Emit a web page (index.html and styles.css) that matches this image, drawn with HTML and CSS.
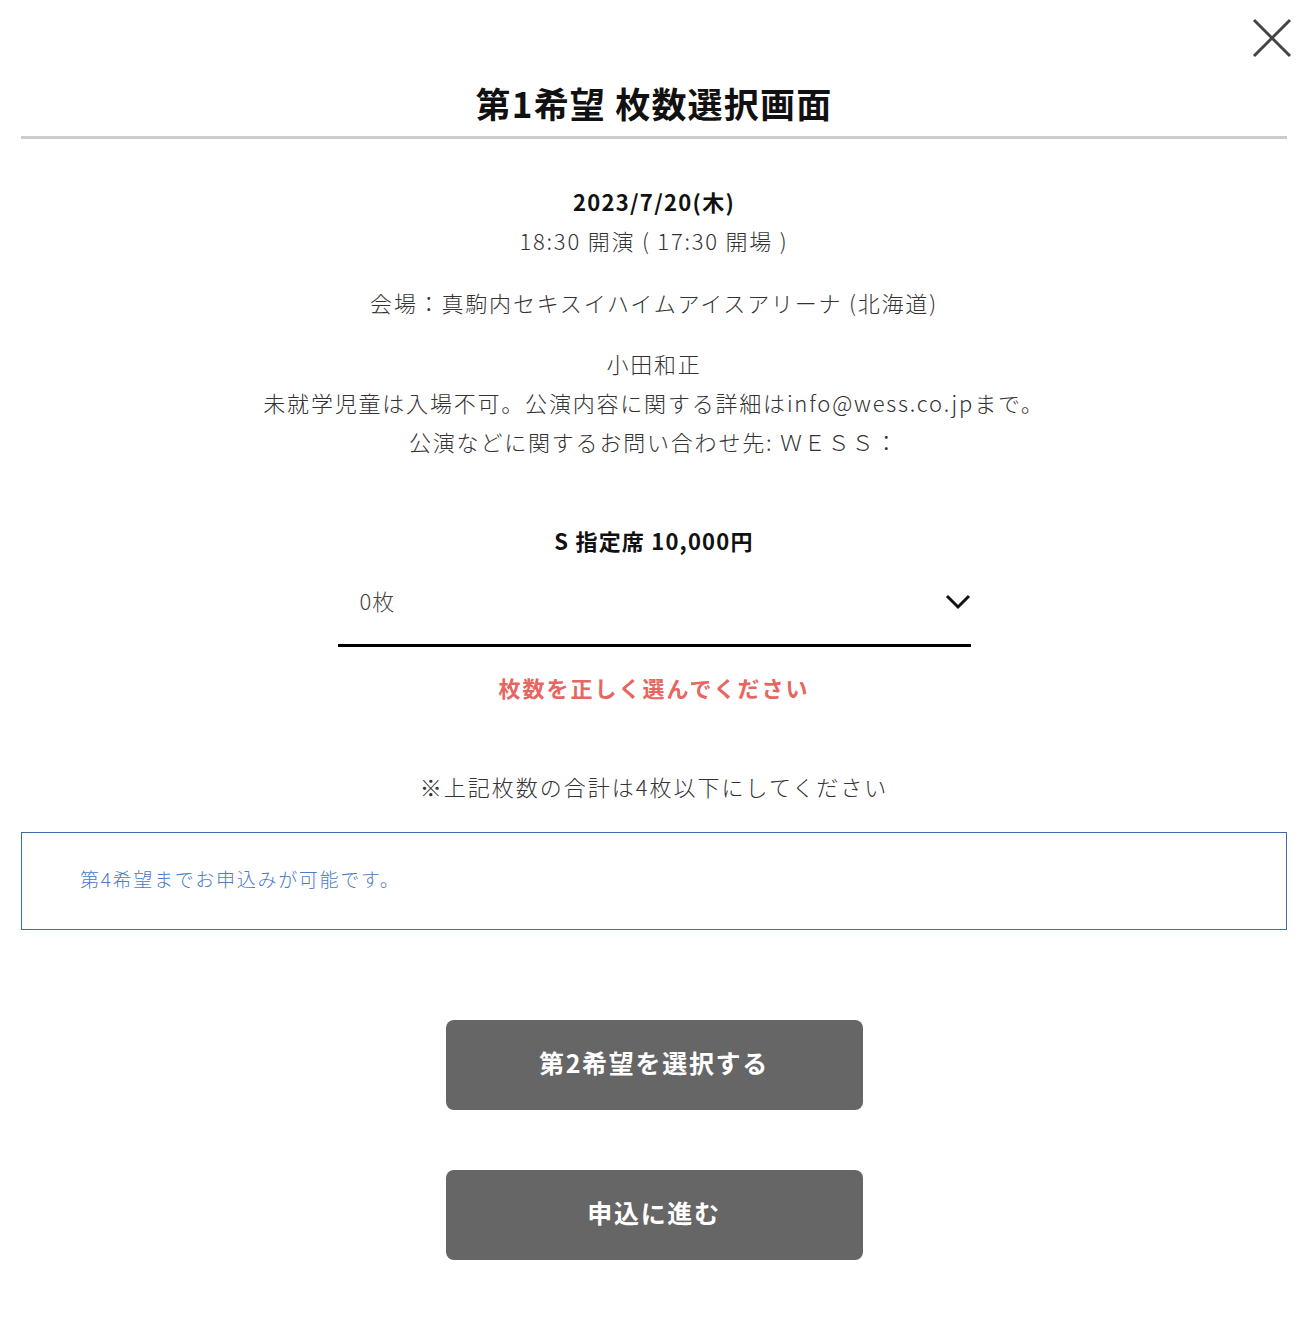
FILE: index.html
```html
<!DOCTYPE html>
<html lang="ja">

<head>
    <meta charset="UTF-8">
    <meta name="viewport" content="width=device-width, initial-scale=1.0">
    <title>枚数選択画面</title>
    <link rel="stylesheet" href="styles.css">
</head>

<body>

    <div class="modal">
        <!-- close button -->
        <button class="close-btn" type="button" aria-label="閉じる">
            <svg width="40" height="40" viewBox="0 0 40 40">
                <path d="M2 2 L38 38 M38 2 L2 38" stroke="#444" stroke-width="3" fill="none" />
            </svg>
        </button>

        <div class="modal-header">
            <h1>第1希望 枚数選択画面</h1>
        </div>

        <div class="event-info">
            <p class="event-date">2023/7/20(木)</p>
            <p class="event-time">18:30 開演 ( 17:30 開場 )</p>
            <p class="event-venue">会場：真駒内セキスイハイムアイスアリーナ (北海道)</p>
            <p class="event-note">小田和正<br>未就学児童は入場不可。公演内容に関する詳細はinfo@wess.co.jpまで。<br>公演などに関するお問い合わせ先: ＷＥＳＳ：</p>
        </div>

        <div class="seat-block">
            <h2>S 指定席 10,000円</h2>
            <div class="select-wrap">
                <select id="count" name="count">
                    <option>0枚</option>
                    <option>1枚</option>
                    <option>2枚</option>
                    <option>3枚</option>
                    <option>4枚</option>
                </select>
                <svg class="chevron" width="26" height="16" viewBox="0 0 26 16">
                    <path d="M2 2 L13 13 L24 2" stroke="#111" stroke-width="3" fill="none" />
                </svg>
            </div>
            <p class="error-msg">枚数を正しく選んでください</p>
        </div>

        <p class="limit-note">※上記枚数の合計は4枚以下にしてください</p>

        <div class="info-box">第4希望までお申込みが可能です。</div>

        <div class="actions">
            <button class="action-btn" type="button">第2希望を選択する</button>
            <button class="action-btn" type="button">申込に進む</button>
        </div>
    </div>

</body>

</html>
```

FILE: styles.css
```css
body {
    font-family: 'Noto Sans CJK JP', 'Noto Sans', sans-serif;
    background-color: #ffffff;
    color: #333333;
    margin: 0;
    padding: 0;
}

p {
    margin: 0;
}

.modal {
    position: relative;
    padding: 0 19px 80px 21px;
}

.close-btn {
    position: absolute;
    top: 18px;
    right: 14px;
    padding: 0;
    border: none;
    background: none;
    cursor: pointer;
}

.close-btn svg {
    display: block;
}

.modal-header {
    border-bottom: 3px solid #cccccc;
    padding-top: 85px;
    padding-bottom: 15px;
}

h1 {
    margin: 0;
    text-align: center;
    font-size: 35px;
    line-height: 36px;
    font-weight: 700;
    letter-spacing: 1.2px;
    color: #111111;
}

.event-info {
    text-align: center;
    padding-top: 43px;
    font-size: 22px;
    font-weight: 300;
    letter-spacing: 1.8px;
}

.event-date {
    font-weight: 700;
    color: #111111;
    line-height: 38px;
    letter-spacing: 1.3px;
}

.event-time {
    line-height: 40px;
}

.event-venue {
    margin-top: 22px;
    line-height: 40px;
}

.event-note {
    margin-top: 22px;
    line-height: 39px;
}

.seat-block {
    margin-top: 60px;
    text-align: center;
}

h2 {
    margin: 0;
    font-size: 22px;
    line-height: 38px;
    font-weight: 700;
    letter-spacing: 1.2px;
    color: #111111;
}

.select-wrap {
    position: relative;
    width: 633px;
    margin: 20px auto 0;
}

select {
    appearance: none;
    -webkit-appearance: none;
    display: block;
    width: 100%;
    height: 68px;
    padding: 0 0 23px 22px;
    border: none;
    border-bottom: 3px solid #000000;
    border-radius: 0;
    background: transparent;
    font-family: inherit;
    font-size: 22px;
    font-weight: 300;
    letter-spacing: 1px;
    color: #444444;
    outline: none;
}

.chevron {
    position: absolute;
    top: 15px;
    right: 0;
    pointer-events: none;
}

.error-msg {
    margin-top: 21px;
    font-size: 22px;
    line-height: 38px;
    font-weight: 700;
    letter-spacing: 2px;
    color: #e86560;
}

.limit-note {
    margin-top: 61px;
    text-align: center;
    font-size: 22px;
    line-height: 38px;
    font-weight: 300;
    letter-spacing: 2px;
}

.info-box {
    margin-top: 27px;
    border: 1px solid #3e6ca8;
    padding: 28px 58px 32px;
    font-size: 19px;
    line-height: 36px;
    font-weight: 300;
    letter-spacing: 1.7px;
    color: #4a7cc4;
}

.actions {
    display: flex;
    flex-direction: column;
    align-items: center;
    gap: 60px;
    margin-top: 90px;
}

.action-btn {
    width: 417px;
    height: 90px;
    padding: 0 0 7px;
    border: none;
    border-radius: 8px;
    background-color: #666666;
    color: #ffffff;
    font-family: inherit;
    font-size: 25px;
    font-weight: 700;
    letter-spacing: 1.7px;
    cursor: pointer;
}
```
